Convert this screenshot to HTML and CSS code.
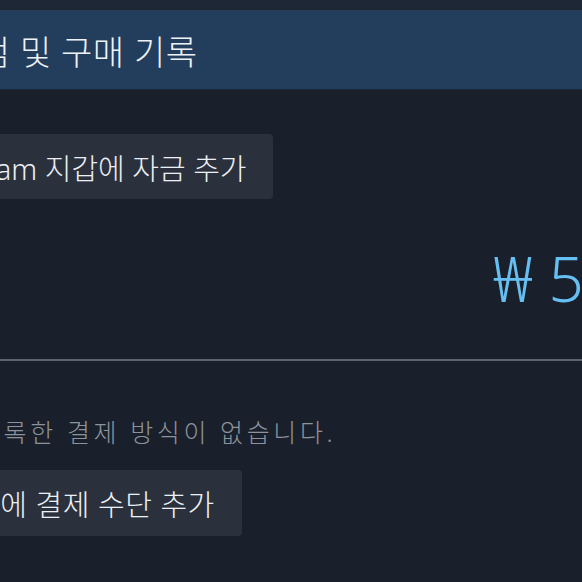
FILE: index.html
```html
<!DOCTYPE html>
<html lang="ko">
<head>
    <meta charset="UTF-8">
    <meta name="viewport" content="width=device-width, initial-scale=1.0">
    <title>계정 정보</title>
    <link rel="stylesheet" href="styles.css">
</head>
<body>

<div class="topbar"></div>

<div class="section-head">
    <h2>상점 및 구매 기록</h2>
</div>

<div class="content">
    <div class="wallet-row">
        <button type="button" class="btn btn-wallet">Steam 지갑에 자금 추가</button>
    </div>

    <div class="balance">
        <span class="balance-amount">₩ 5</span>
    </div>

    <hr class="divider">

    <p class="no-payment">등록한 결제 방식이 없습니다.</p>

    <div class="payment-row">
        <button type="button" class="btn btn-payment">계정에 결제 수단 추가</button>
    </div>
</div>

</body>
</html>
```

FILE: styles.css
```css
html, body {
    margin: 0;
    padding: 0;
    height: 100%;
}

body {
    font-family: "Noto Sans", "Noto Sans CJK KR", sans-serif;
    background-color: #1a202b;
    color: #e6ebf0;
    overflow: hidden;
}

.topbar {
    height: 10px;
    background-color: #1e2736;
    border-bottom: 1px solid #2a3a52;
}

.section-head {
    height: 78px;
    background-color: #233e5c;
    display: flex;
    align-items: center;
    border-bottom: 1px solid #1d2a3c;
}

.section-head h2 {
    margin: 0 0 0 -53px;
    font-size: 34px;
    font-weight: 300;
    color: #eef2f6;
    white-space: nowrap;
    letter-spacing: 0.5px;
}

.content {
    display: flex;
    flex-direction: column;
}

.wallet-row {
    margin-top: 44px;
}

.btn {
    font-family: "Noto Sans", "Noto Sans CJK KR", sans-serif;
    font-size: 29px;
    font-weight: 300;
    color: #eceff3;
    background-color: #2a313d;
    border: none;
    border-radius: 4px;
    height: 65px;
    white-space: nowrap;
    cursor: pointer;
}

.btn-wallet {
    margin-left: -46px;
    padding: 0 26px 0 0;
}

.balance {
    display: flex;
    justify-content: flex-end;
    height: 160px;
    margin-right: -2px;
}

.balance-amount {
    margin-top: 48px;
    font-size: 62px;
    font-weight: 300;
    color: #66bff2;
    white-space: nowrap;
    line-height: 1;
}

.divider {
    margin: 0;
    border: none;
    height: 2px;
    background-color: #5b6370;
}

.no-payment {
    margin: 52px 0 0 -23px;
    font-size: 25px;
    font-weight: 300;
    letter-spacing: 3.6px;
    color: #8c939c;
    white-space: nowrap;
}

.payment-row {
    margin-top: 21px;
}

.btn-payment {
    margin-left: -54px;
    padding: 0 27px 0 0;
    height: 66px;
    letter-spacing: 0.5px;
}
```
